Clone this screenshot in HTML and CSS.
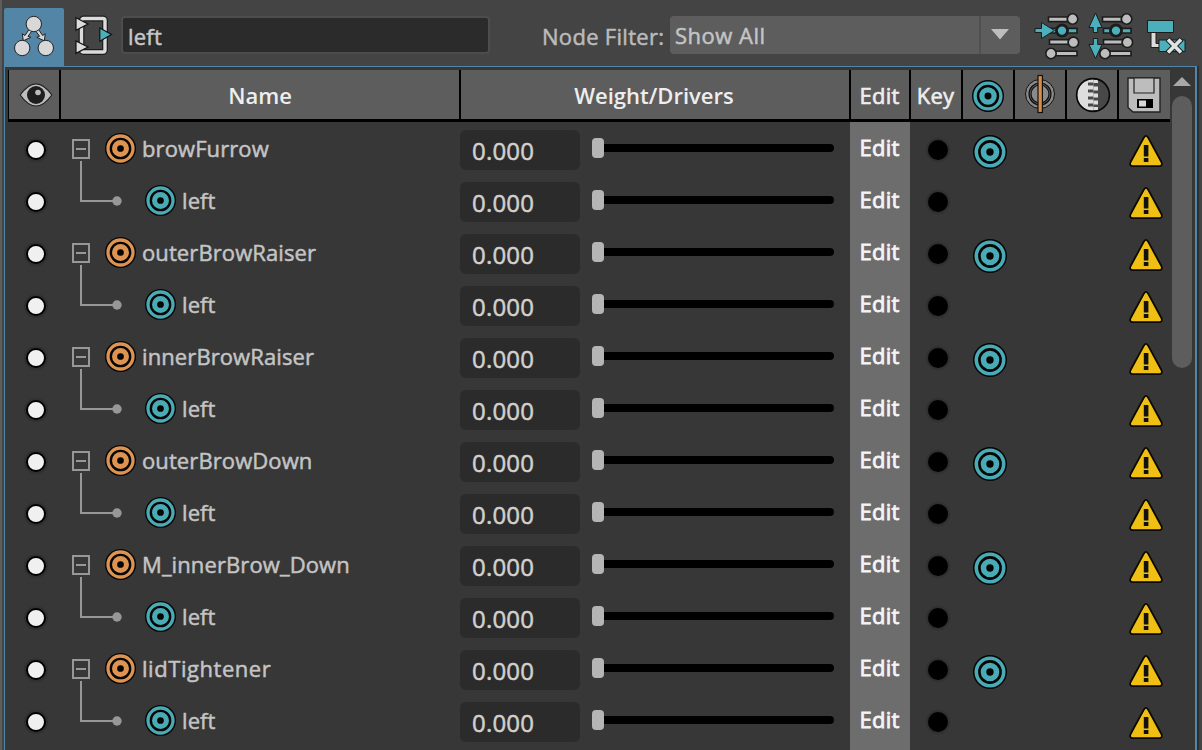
FILE: index.html
```
<!DOCTYPE html>
<html lang="en">
<head>
    <meta charset="UTF-8">
    <meta name="viewport" content="width=device-width, initial-scale=1.0">
    <title>Shape Editor</title>
    <link rel="stylesheet" href="styles.css">
</head>
<body>
    <!-- shared icons -->
    <svg class="symbols">
        <symbol id="target" viewBox="0 0 34 34">
            <circle cx="17" cy="17" r="17" fill="#050505"/>
            <circle cx="17" cy="17" r="13.7" fill="none" stroke="currentColor" stroke-width="3.6"/>
            <circle cx="17" cy="17" r="6.5" fill="none" stroke="currentColor" stroke-width="5.6"/>
        </symbol>
        <symbol id="warning" viewBox="0 0 34 34">
            <path d="M15 3.4Q17 .2 19 3.4L32.4 28Q34 31.8 30.5 32.2H3.5Q0 31.8 1.6 28z" fill="#f0bf14" stroke="#0c0a00" stroke-width="1.8"/>
            <path d="M14.8 11h4.6v11.5h-4.6zM14.8 24h4.6v4h-4.6z" fill="#111"/>
        </symbol>
        <symbol id="slider-lines" viewBox="0 0 36 48">
            <g stroke="#1c1c1c" stroke-width="1.6">
                <path d="M4.5 4h19v4.6h-19zM5.5 26.6h19v4.6h-19zM10 38.2h23v4.6H10z" fill="#bdbdbd"/>
                <path d="M5.5 15.4h27.5v4.6H5.5z" fill="#4bb0bb"/>
                <circle cx="18" cy="17.6" r="7" fill="#1c1c1c" stroke="none"/>
                <g fill="#bdbdbd">
                    <circle cx="28.6" cy="6" r="5.2"/>
                    <circle cx="29.4" cy="29.3" r="5.2"/>
                    <circle cx="7" cy="40.5" r="5.2"/>
                </g>
                <circle cx="18" cy="17.6" r="5" fill="#4bb0bb"/>
            </g>
        </symbol>
    </svg>

    <div class="toolbar">
        <button class="tree-button">
            <svg width="60" height="58" viewBox="0 0 60 58">
                <g stroke="#222" stroke-width="1" fill="#d8d8d8">
                    <path d="M25 21.5l-4 6-2.7-1.7 1 7 7.5-3.5-2.8-1 4-5.5z"/>
                    <path d="M34.6 21.5l4 6 2.7-1.7-1 7-7.5-3.5 2.8-1-4-5.5z"/>
                    <circle cx="29.8" cy="16" r="7.7"/>
                    <circle cx="18.2" cy="40" r="7.7"/>
                    <circle cx="41.8" cy="40" r="7.7"/>
                </g>
            </svg>
        </button>
        <svg class="connections" width="38" height="40" viewBox="0 0 38 40">
            <rect x="6.5" y="3.5" width="23.5" height="33.5" rx="2" fill="none" stroke="#1d1d1d" stroke-width="5.8"/>
            <rect x="6.5" y="3.5" width="23.5" height="33.5" rx="2" fill="none" stroke="#dcdcdc" stroke-width="3.4"/>
            <path d="M1 2.8v12.4L13 9zM1 26v12.4L13 32z" fill="#dcdcdc" stroke="#111" stroke-width="1.2"/>
            <path d="M24.8 13v13.2L36.5 19.5z" fill="#4bb0bb" stroke="#111" stroke-width="1.2"/>
        </svg>
        <input class="search" type="text" value="left">
        <span class="filter-label">Node Filter:</span>
        <div class="filter">
            <span>Show All</span>
            <div class="filter-arrow">
                <svg width="18" height="11" viewBox="0 0 18 11"><path d="M0 0h18L9 10.5z" fill="#bdbdbd"/></svg>
            </div>
        </div>
        <div class="tools">
            <svg width="46" height="48" viewBox="0 0 46 48">
                <use href="#slider-lines" x="10" y="1" width="36" height="48"/>
                <path d="M1 16.500h6.500v-6l13 8-13 8v-6H1z" fill="#4bb0bb" stroke="#1c1c1c"/>
            </svg>
            <svg width="46" height="48" viewBox="0 0 46 48">
                <use href="#slider-lines" x="10" y="1" width="36" height="48"/>
                <path d="M7.5 1l6.500 14.500h-4.300v5H5.300v-5H1z" fill="#4bb0bb" stroke="#1c1c1c"/>
                <path d="M7.5 46.500l6.500-14h-4.300v-6H5.300v6H1z" fill="#4bb0bb" stroke="#1c1c1c"/>
            </svg>
            <svg width="40" height="48" viewBox="0 0 40 48">
                <path d="M5 20v15.500h9v-4H10V20z" fill="#dcdcdc" stroke="#1c1c1c"/>
                <path d="M1.500 8.500h26v12h-26zM13 28h26v11.500H13z" fill="#4bb0bb" stroke="#1c1c1c"/>
                <path d="M21.500 27l14 14M35.500 27l-14 14" stroke="#1c1c1c" stroke-width="5.4"/>
                <path d="M22 27.500l13 13M35 27.500L22 40.500" stroke="#e2e2e2" stroke-width="3.6"/>
            </svg>
        </div>
    </div>

    <div class="panel">
        <div class="table">
            <div class="header">
                <div class="cell eye">
                    <svg width="34" height="26" viewBox="0 0 34 26">
                        <path d="M1.200 13Q9 1.800 17 1.800T32.800 13Q25 24 17 24T1.200 13z" fill="#bdbdbd" stroke="#222" stroke-width="1.2"/>
                        <circle cx="17" cy="13" r="9" fill="#1e1e1e"/>
                        <circle cx="19" cy="10.500" r="2.8" fill="#bdbdbd"/>
                    </svg>
                </div>
                <div class="cell">Name</div>
                <div class="cell weight-head">Weight/Drivers</div>
                <div class="cell light">Edit</div>
                <div class="cell light">Key</div>
                <div class="cell head-target"><svg class="teal" width="32" height="32"><use href="#target"/></svg></div>
                <div class="cell mirror">
                    <svg width="32" height="40" viewBox="0 0 32 40">
                        <circle cx="16" cy="20" r="14.5" fill="#8a8a8a" stroke="#111" stroke-width="1"/>
                        <circle cx="16" cy="20" r="11" fill="#5d5d5d" stroke="#111" stroke-width="1.2"/>
                        <circle cx="16" cy="20" r="9" fill="#8a8a8a" stroke="#111" stroke-width="1.2"/>
                        <rect x="14" y="1.5" width="4.4" height="37" fill="#d98d4d" stroke="#111" stroke-width="1.2"/>
                    </svg>
                </div>
                <div class="cell zip">
                    <svg width="36" height="36" viewBox="0 0 36 36">
                        <circle cx="18" cy="18" r="16.4" fill="#484848"/>
                        <path d="M13 2.600a16.400 16.400 0 0 0 0 30.800h5.500V2.200z" fill="#dedede"/>
                        <path d="M13 5.500h5.500v3H13zM13 12.500h5.500v3H13zM13 19.500h5.500v3H13zM13 26.500h5.500v3H13z" fill="#4a4a4a"/>
                        <path d="M18.500 3h4.500v3h-4.500zM18.500 9.500H23v4h-4.500zM18.500 16.500H23v4h-4.500zM18.500 23.500H23v4h-4.500zM18.500 30H23v3h-4.500z" fill="#dedede"/>
                        <circle cx="18" cy="18" r="16.4" fill="none" stroke="#080808" stroke-width="1.6"/>
                    </svg>
                </div>
                <div class="cell save">
                    <svg width="34" height="36" viewBox="0 0 34 36">
                        <path d="M1 1h32v34H6l-5-4.500z" fill="#bdbdbd" stroke="#222" stroke-width="1.4"/>
                        <path d="M7 1h20v15H7z" fill="#bdbdbd" stroke="#222" stroke-width="1.2"/>
                        <path d="M10 22h16v9H10z" fill="#000"/>
                        <path d="M12 23.500h7v6h-7z" fill="#d8d8d8"/>
                    </svg>
                </div>
            </div>
            <div class="rows" id="rows"></div>
        </div>
        <div class="scrollbar">
            <svg width="18" height="9" viewBox="0 0 18 9"><path d="M0 9h18L9 0z" fill="#a8a8a8"/></svg>
            <div class="thumb"></div>
        </div>
    </div>

    <script>
        const shapes = ['browFurrow', 'outerBrowRaiser', 'innerBrowRaiser', 'outerBrowDown', 'M_innerBrow_Down', 'lidTightener'];
        const rows = document.getElementById('rows');

        const parentBranch = `<svg class="branch" width="45" height="52" fill="none" stroke="#979797" stroke-width="2">
            <path d="M13 18h16v18H13zM16 27h10M21 39v13"/></svg>`;
        const childBranch = `<svg class="branch-child" width="85" height="52">
            <path d="M21 0v27h33" fill="none" stroke="#979797" stroke-width="2"/>
            <circle cx="57" cy="27" r="4.7" fill="#979797"/></svg>`;

        function addRow(name, isParent) {
            const row = document.createElement('div');
            row.className = 'row';
            row.innerHTML = `
                <div class="visible"><span class="dot white"></span></div>
                <div class="name">
                    ${isParent ? parentBranch : childBranch}
                    <svg class="${isParent ? 'orange' : 'teal'}" width="31" height="31"><use href="#target"/></svg>
                    <span>${name}</span>
                </div>
                <div class="weight">
                    <span class="value">0.000</span>
                    <div class="slider"><div class="handle"></div></div>
                </div>
                <div class="edit">Edit</div>
                <div class="key"><span class="dot"></span></div>
                <div class="combo">${isParent ? '<svg class="teal" width="34" height="34"><use href="#target"/></svg>' : ''}</div>
                <div></div>
                <div></div>
                <div class="warn"><svg width="34" height="34"><use href="#warning"/></svg></div>`;
            rows.appendChild(row);
        }

        shapes.forEach((shape) => {
            addRow(shape, true);
            addRow('left', false);
        });
    </script>
</body>
</html>
```
FILE: styles.css
```
* {
    box-sizing: border-box;
}

body {
    margin: 0;
    height: 750px;
    overflow: hidden;
    display: flex;
    flex-direction: column;
    background: #444;
    border-left: 2px solid #5d5d5d;
    color: #c4c4c4;
    font-family: "Open Sans", "Noto Sans", sans-serif;
    font-size: 22px;
    font-kerning: none;
    -webkit-text-stroke: 0.5px currentColor;
}

svg {
    display: block;
    flex-shrink: 0;
}

.symbols {
    position: absolute;
    width: 0;
    height: 0;
}

.teal {
    color: #49abb5;
}

.orange {
    color: #de9350;
}

.toolbar {
    display: flex;
    height: 66px;
    padding: 8px 0 0 2px;
    flex-shrink: 0;
}

.tree-button {
    width: 60px;
    height: 58px;
    padding: 0;
    border: none;
    border-radius: 2px 2px 0 0;
    background: #5285a6;
}

.connections {
    margin: 7px 0 0 11px;
}

.search {
    width: 369px;
    height: 38px;
    margin: 8px 0 0 8px;
    padding: 2px 4px 0 5px;
    border: 2px solid #4d4d4d;
    border-radius: 4px;
    outline: none;
    background: #2b2b2b;
    color: #c8c8c8;
    font: inherit;
    letter-spacing: 0.2px;
}

.filter-label {
    width: 128px;
    margin: 8px 0 0 52px;
    line-height: 41px;
    letter-spacing: 0.3px;
    color: #bbb;
    white-space: nowrap;
}

.filter {
    display: flex;
    justify-content: space-between;
    width: 350px;
    height: 38px;
    margin-top: 8px;
    padding-left: 5px;
    border-radius: 4px;
    background: #5d5d5d;
    line-height: 39px;
    letter-spacing: 0.5px;
}

.filter-arrow {
    display: flex;
    justify-content: center;
    width: 41px;
    padding: 13px 2px 0 0;
    border-left: 2px solid #505050;
}

.tools {
    display: flex;
    gap: 8px;
    margin: 4px 0 0 14px;
}

.tools svg:last-child {
    margin-left: 4px;
}

.panel {
    display: flex;
    flex: 1;
    width: 1193px;
    margin-left: 2px;
    padding: 3px 0 0 3px;
    border: 1px solid #5285a6;
    border-right-width: 2px;
    border-bottom: none;
    background: #373737;
    box-shadow: 2px 0 0 #2e2e2e;
}

.table {
    display: flex;
    flex-direction: column;
    width: 1162px;
}

.header {
    display: grid;
    grid-template-columns: 53px 400px 390px 60px 52px 52px 52px 52px 51px;
    height: 52px;
    border-bottom: 3px solid #000;
    background: #5d5d5d;
    color: #eee;
    font-weight: 600;
    -webkit-text-stroke: 0;
}

.cell {
    display: flex;
    align-items: center;
    justify-content: center;
    border-right: 2px solid #000;
}

.cell:first-child {
    border-left: 1px solid #000;
}

.cell:last-child {
    border-right: none;
}

.cell.eye {
    padding-left: 3px;
}

.weight-head {
    padding-right: 2px;
}

.light {
    padding-right: 1px;
    font-weight: 400;
    letter-spacing: 0.2px;
    -webkit-text-stroke: 0.6px currentColor;
}

.head-target {
    padding-top: 3px;
}

.mirror {
    padding-bottom: 1px;
}

.zip {
    padding: 0 0 0 2px;
}

.save {
    padding: 1px 1px 0 0;
}

.rows {
    flex: 1;
    background: linear-gradient(#6d6d6d, #6d6d6d) 842px 0 / 60px 100% no-repeat;
}

.row {
    display: grid;
    grid-template-columns: 52px 400px 390px 60px 52px 52px 52px 52px 50px;
    height: 52px;
}

.row > div {
    display: flex;
    align-items: center;
}

.row .visible,
.row .key,
.row .combo,
.row .warn {
    justify-content: center;
    padding: 4px 0 0 4px;
}

.dot {
    width: 20px;
    height: 20px;
    border: 2px solid #000;
    border-radius: 50%;
    background: #000;
    box-shadow: 0 0 0 2px #303030;
}

.white {
    background: #f0f0f0;
}

.row .combo {
    padding: 8px 0 0 4px;
}

.row .warn {
    padding: 6px 0 0 5px;
}

.name span {
    margin-left: 6px;
    letter-spacing: 0.1px;
}

.row:nth-child(11) .name span {
    letter-spacing: 0.55px;
}

.value {
    width: 120px;
    height: 40px;
    margin-top: 4px;
    padding-left: 12px;
    border-radius: 6px;
    background: #2b2b2b;
    color: #d0d0d0;
    font-size: 24px;
    line-height: 41px;
    letter-spacing: 0.2px;
}

.slider {
    display: flex;
    align-items: center;
    width: 242px;
    height: 8px;
    margin-left: 12px;
    border-radius: 4px;
    background: #000;
}

.handle {
    width: 12px;
    height: 20px;
    border-radius: 4px;
    background: #b5b5b5;
}

.row .edit {
    justify-content: center;
    padding: 0 1px 2px 0;
    color: #f4f4f4;
    letter-spacing: 0.2px;
    -webkit-text-stroke: 0.8px currentColor;
}

.scrollbar {
    display: flex;
    flex-direction: column;
    align-items: center;
    width: 24px;
    padding-top: 7px;
}

.thumb {
    width: 20px;
    height: 272px;
    margin-top: 10px;
    border-radius: 10px;
    background: #5d5d5d;
}
```
